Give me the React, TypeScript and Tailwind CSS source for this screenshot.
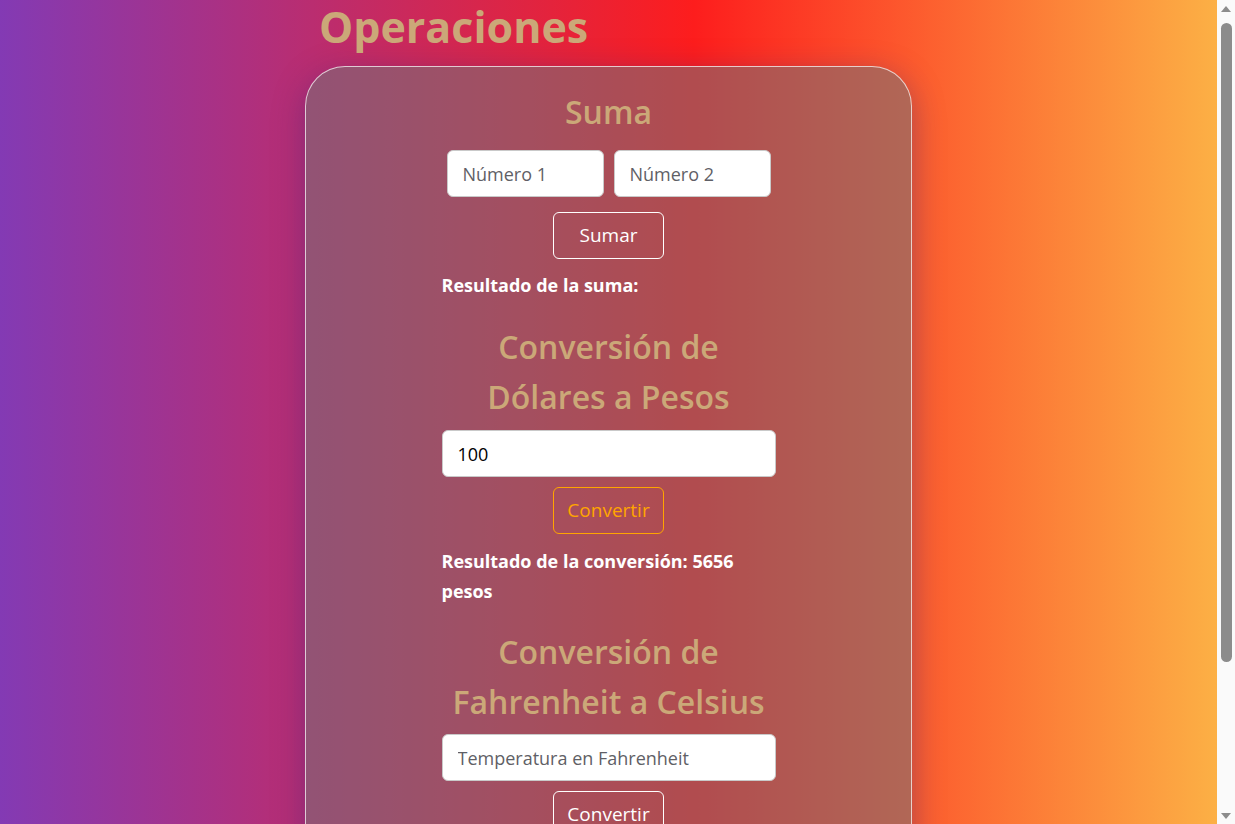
import React, { useState } from "react";

function App() {
  const [num1, setNum1] = useState("");
  const [num2, setNum2] = useState("");
  const [suma, setSuma] = useState<string>("");
  const [dolares, setDolares] = useState("100");
  const [pesos, setPesos] = useState<string>("5656 pesos");
  const [fahrenheit, setFahrenheit] = useState("");
  const [celsius, setCelsius] = useState<string>("");

  const sumar = () => {
    const r = Number(num1) + Number(num2);
    setSuma(isNaN(r) ? "" : String(r));
  };
  const convertirPesos = () => {
    const r = Math.round(Number(dolares) * 56.56);
    setPesos(`${r} pesos`);
  };
  const convertirCelsius = () => {
    const r = ((Number(fahrenheit) - 32) * 5) / 9;
    setCelsius(`${r.toFixed(2)} °C`);
  };

  const heading = "text-center text-[32px] leading-[50px] font-semibold text-[#cba878]";
  const input =
    "h-[47px] rounded-[6px] border border-[#c9c9c9] bg-white px-[15px] text-[18px] text-black placeholder:text-[#5f5f66] outline-none";
  const result = "text-[18px] leading-[30px] font-bold text-white";
  const button = "mx-auto mt-[10px] h-[47px] w-[111px] rounded-[6px] border text-[19px]";

  return (
    <div className="flex min-h-screen font-['Open_Sans',sans-serif]">
      <main className="min-w-0 flex-1 bg-[linear-gradient(90deg,#833ab4_0%,#fd1d1d_57%,#fcb045_100%)] pb-[40px]">
        <div className="mx-auto w-[607px]">
          <h1 className="pl-[14px] text-[43px] leading-[54px] font-bold text-[#cba878]">Operaciones</h1>
          <div className="mt-[12px] rounded-[40px] border border-white/70 bg-[rgba(115,115,120,0.55)] pt-[20px] pb-[40px] shadow-[0_8px_32px_0_rgba(31,38,135,0.37)]">
            <div className="mx-auto flex w-[334px] flex-col">
              <h2 className={heading}>Suma</h2>
              <div className="mt-[13px] flex justify-center gap-[10px]">
                <input className={`${input} w-[157px]`} placeholder="Número 1" value={num1} onChange={(e) => setNum1(e.target.value)} />
                <input className={`${input} w-[157px]`} placeholder="Número 2" value={num2} onChange={(e) => setNum2(e.target.value)} />
              </div>
              <button onClick={sumar} className={`${button} !mt-[15px] border-white text-white`}>
                Sumar
              </button>
              <p className={`${result} mt-[11px]`}>Resultado de la suma: {suma}</p>

              <h2 className={`${heading} mt-[22px]`}>Conversión de Dólares a Pesos</h2>
              <input className={`${input} mt-[8px] w-full`} value={dolares} onChange={(e) => setDolares(e.target.value)} />
              <button onClick={convertirPesos} className={`${button} border-[#ffa500] text-[#ffa500]`}>
                Convertir
              </button>
              <p className={`${result} mt-[12px]`}>Resultado de la conversión: {pesos}</p>

              <h2 className={`${heading} mt-[21px]`}>Conversión de Fahrenheit a Celsius</h2>
              <input
                className={`${input} mt-[7px] w-full`}
                placeholder="Temperatura en Fahrenheit"
                value={fahrenheit}
                onChange={(e) => setFahrenheit(e.target.value)}
              />
              <button onClick={convertirCelsius} className={`${button} border-white text-white`}>
                Convertir
              </button>
              <p className={`${result} mt-[12px]`}>Resultado de la conversión: {celsius}</p>
            </div>
          </div>
        </div>
      </main>

      {/* fake window scrollbar */}
      <aside className="sticky top-0 flex h-screen w-[18px] shrink-0 flex-col items-center bg-[#fafafa]">
        <div className="flex h-[17px] w-full items-center justify-center">
          <svg width="10" height="6" viewBox="0 0 10 6">
            <path d="M0 6 L5 0 L10 6 Z" fill="#8c8c8c" />
          </svg>
        </div>
        <div className="mt-[6px] h-[639px] w-[11px] rounded-full bg-[#8c8c8c]" />
        <div className="flex-1" />
        <div className="flex h-[17px] w-full items-center justify-center">
          <svg width="10" height="6" viewBox="0 0 10 6">
            <path d="M0 0 L10 0 L5 6 Z" fill="#8c8c8c" />
          </svg>
        </div>
      </aside>
    </div>
  );
}

export default App;
